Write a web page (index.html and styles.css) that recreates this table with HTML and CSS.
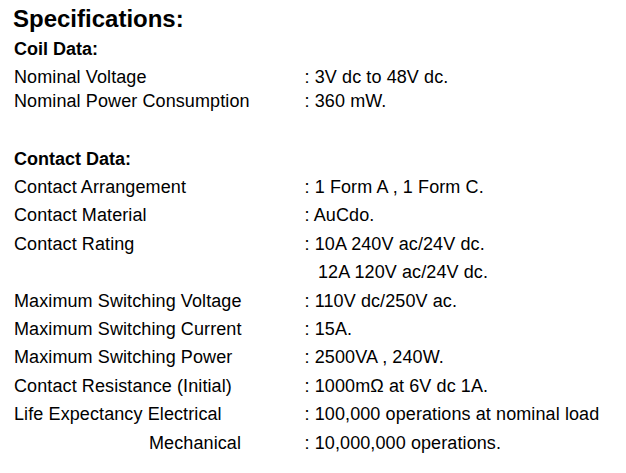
FILE: index.html
```html
<!DOCTYPE html>
<html>
<head>
<meta charset="utf-8">
<link rel="stylesheet" href="styles.css">
</head>
<body>
<div class="page">
  <h1 class="title">Specifications:</h1>
  <section class="coil">
    <h2 class="heading">Coil Data:</h2>
    <div class="grid">
      <div class="label">Nominal Voltage</div><div class="value">: 3V dc to 48V dc.</div>
      <div class="label">Nominal Power Consumption</div><div class="value">: 360 mW.</div>
    </div>
  </section>
  <section class="contact">
    <h2 class="heading">Contact Data:</h2>
    <div class="grid">
      <div class="label">Contact Arrangement</div><div class="value">: 1 Form A , 1 Form C.</div>
      <div class="label">Contact Material</div><div class="value">: AuCdo.</div>
      <div class="label">Contact Rating</div><div class="value">: 10A 240V ac/24V dc.</div>
      <div class="label"></div><div class="value cont">12A 120V ac/24V dc.</div>
      <div class="label">Maximum Switching Voltage</div><div class="value">: 110V dc/250V ac.</div>
      <div class="label">Maximum Switching Current</div><div class="value">: 15A.</div>
      <div class="label">Maximum Switching Power</div><div class="value">: 2500VA , 240W.</div>
      <div class="label">Contact Resistance (Initial)</div><div class="value">: 1000mΩ at 6V dc 1A.</div>
      <div class="label">Life Expectancy Electrical</div><div class="value">: 100,000 operations at nominal load</div>
      <div class="label sub">Mechanical</div><div class="value">: 10,000,000 operations.</div>
    </div>
  </section>
</div>
</body>
</html>
```

FILE: styles.css
```css
html, body {
  margin: 0;
  padding: 0;
  background: #fff;
}
.page {
  padding: 4px 0 0 14px;
  font-family: "Liberation Sans", Arial, sans-serif;
  color: #000;
  font-size: 18px;
  letter-spacing: 0.1px;
}
.title {
  margin: 0 0 3px -1px;
  font-size: 24px;
  line-height: 30px;
  font-weight: bold;
  letter-spacing: 0;
}
.heading {
  margin: 0;
  font-size: 18px;
  font-weight: bold;
  letter-spacing: 0;
}
.grid {
  display: grid;
  grid-template-columns: 290.5px 1fr;
}
.coil .heading {
  line-height: 24px;
  margin-bottom: 4px;
}
.coil .grid {
  grid-auto-rows: 24px;
  line-height: 24px;
}
.contact {
  margin-top: 31.6px;
}
.contact .heading {
  line-height: 28.4px;
}
.contact .grid {
  grid-auto-rows: 28.4px;
  line-height: 28.4px;
}
.label, .value {
  white-space: nowrap;
}
.cont {
  padding-left: 13.5px;
}
.sub {
  padding-left: 135px;
}
```
